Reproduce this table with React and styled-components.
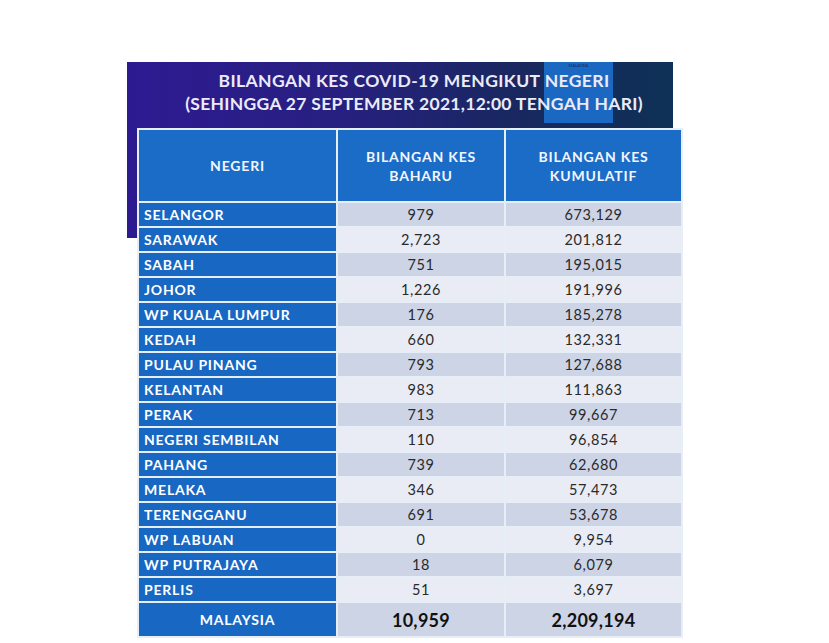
import React from "react"
import styled, { createGlobalStyle } from "styled-components"

const GlobalStyle = createGlobalStyle`
    html, body {
        margin: 0;
        padding: 0;
        background: #ffffff;
    }
    body {
        font-family: "Lato", "Open Sans", "Liberation Sans", sans-serif;
    }
`

const Page = styled.div`
    width: 829px;
    height: 643px;
    padding: 62px 0 0 127px;
    box-sizing: border-box;
    overflow: hidden;
`

const Board = styled.div`
    width: 556px;
    background-image: linear-gradient(90deg, #2d1a92 0%, #27207f 40%, #18285f 72%, #0e3156 100%);
    background-size: 546px 176px;
    background-repeat: no-repeat;
`

const Title = styled.div`
    position: relative;
    width: 546px;
    height: 66px;
    box-sizing: border-box;
    padding: 7px 0 0 28px;
    text-align: center;
    color: #ebeaf7;
    font-size: 17.5px;
    font-weight: 700;
    line-height: 23px;
`

const TitleLine = styled.div`
    position: relative;
    z-index: 1;
    white-space: nowrap;
    letter-spacing: ${p => p.$spacing || "0"};
`

const Stamp = styled.div`
    position: absolute;
    left: 417px;
    top: 0;
    width: 69px;
    height: 61px;
    background: #1b68c2;
    color: #15347a;
    font-size: 4px;
    font-weight: 700;
    text-align: center;
    line-height: 8px;
`

const Table = styled.div`
    margin-left: 10px;
    width: 546px;
    box-sizing: border-box;
    padding: 2px;
    background: #e6eef8;
    display: grid;
    grid-template-columns: 197px 166px 175px;
    grid-template-rows: 71px repeat(16, 23px) 33px;
    gap: 2px;
`

const HeadCell = styled.div`
    background: #1a6cc7;
    color: #f2f6fc;
    font-size: 14px;
    font-weight: 700;
    line-height: 19px;
    display: flex;
    align-items: center;
    justify-content: center;
    text-align: center;
    letter-spacing: 0.8px;
`

const StateCell = styled.div`
    background: #1767c3;
    color: #ffffff;
    font-size: 14px;
    font-weight: 700;
    letter-spacing: 0.8px;
    display: flex;
    align-items: center;
    justify-content: ${p => (p.$total ? "center" : "flex-start")};
    padding-left: ${p => (p.$total ? "0" : "5px")};
`

const NumCell = styled.div`
    background: ${p => (p.$shade ? "#cdd4e6" : "#e9ecf4")};
    color: ${p => (p.$total ? "#111111" : "#2a2a2a")};
    font-size: ${p => (p.$total ? "18px" : "14.5px")};
    font-weight: ${p => (p.$total ? 700 : 400)};
    letter-spacing: ${p => (p.$total ? "0.3px" : "0.6px")};
    display: flex;
    align-items: center;
    justify-content: center;
`

const rows = [
    ["SELANGOR", "979", "673,129"],
    ["SARAWAK", "2,723", "201,812"],
    ["SABAH", "751", "195,015"],
    ["JOHOR", "1,226", "191,996"],
    ["WP KUALA LUMPUR", "176", "185,278"],
    ["KEDAH", "660", "132,331"],
    ["PULAU PINANG", "793", "127,688"],
    ["KELANTAN", "983", "111,863"],
    ["PERAK", "713", "99,667"],
    ["NEGERI SEMBILAN", "110", "96,854"],
    ["PAHANG", "739", "62,680"],
    ["MELAKA", "346", "57,473"],
    ["TERENGGANU", "691", "53,678"],
    ["WP LABUAN", "0", "9,954"],
    ["WP PUTRAJAYA", "18", "6,079"],
    ["PERLIS", "51", "3,697"],
]

const App = () => {
    return (
        <Page>
            <GlobalStyle />
            <Board>
                <Title>
                    <Stamp>MALAYSIA</Stamp>
                    <TitleLine $spacing="0.4px">BILANGAN KES COVID-19 MENGIKUT NEGERI</TitleLine>
                    <TitleLine $spacing="0.3px">(SEHINGGA 27 SEPTEMBER 2021,12:00 TENGAH HARI)</TitleLine>
                </Title>
                <Table>
                    <HeadCell>NEGERI</HeadCell>
                    <HeadCell>BILANGAN KES<br />BAHARU</HeadCell>
                    <HeadCell>BILANGAN KES<br />KUMULATIF</HeadCell>
                    {rows.map(([state, baru, kumulatif], i) => (
                        <React.Fragment key={state}>
                            <StateCell>{state}</StateCell>
                            <NumCell $shade={i % 2 === 0}>{baru}</NumCell>
                            <NumCell $shade={i % 2 === 0}>{kumulatif}</NumCell>
                        </React.Fragment>
                    ))}
                    <StateCell $total>MALAYSIA</StateCell>
                    <NumCell $shade $total>10,959</NumCell>
                    <NumCell $shade $total>2,209,194</NumCell>
                </Table>
            </Board>
        </Page>
    )
}

export default App
